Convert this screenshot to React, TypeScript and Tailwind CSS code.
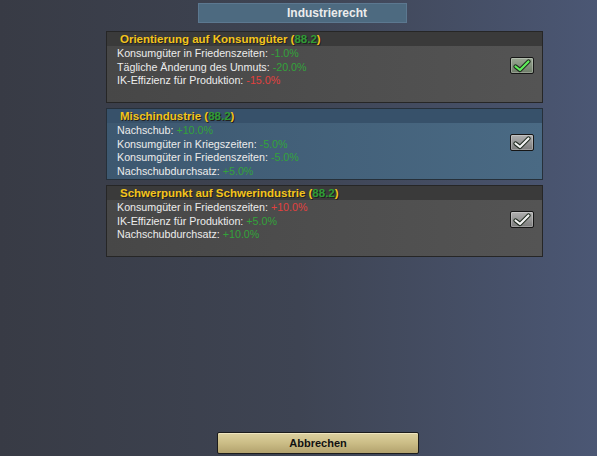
import React from "react";

type Eff = { label: string; value: string; good: boolean };
type Law = { title: string; score: string; effects: Eff[]; active?: boolean; selected?: boolean };

const laws: Law[] = [
  {
    title: "Orientierung auf Konsumgüter",
    score: "88.2",
    selected: true,
    effects: [
      { label: "Konsumgüter in Friedenszeiten:", value: "-1.0%", good: true },
      { label: "Tägliche Änderung des Unmuts:", value: "-20.0%", good: true },
      { label: "IK-Effizienz für Produktion:", value: "-15.0%", good: false },
    ],
  },
  {
    title: "Mischindustrie",
    score: "88.2",
    active: true,
    effects: [
      { label: "Nachschub:", value: "+10.0%", good: true },
      { label: "Konsumgüter in Kriegszeiten:", value: "-5.0%", good: true },
      { label: "Konsumgüter in Friedenszeiten:", value: "-5.0%", good: true },
      { label: "Nachschubdurchsatz:", value: "+5.0%", good: true },
    ],
  },
  {
    title: "Schwerpunkt auf Schwerindustrie",
    score: "88.2",
    effects: [
      { label: "Konsumgüter in Friedenszeiten:", value: "+10.0%", good: false },
      { label: "IK-Effizienz für Produktion:", value: "+5.0%", good: true },
      { label: "Nachschubdurchsatz:", value: "+10.0%", good: true },
    ],
  },
];

function Check({ green }: { green?: boolean }) {
  return (
    <div
      className={
        "w-[24px] h-[17px] rounded-[2px] border border-[#161616] shadow-[inset_0_0_0_1px_rgba(255,255,255,0.25)] flex items-center justify-center " +
        (green
          ? "bg-gradient-to-b from-[#9aa894] to-[#6e7c68]"
          : "bg-gradient-to-b from-[#b0b0b0] to-[#7c7c7c]")
      }
    >
      <svg width="20" height="14" viewBox="0 0 20 14">
        <path d="M3.5 7.5 L8 11 L16.5 2.5" fill="none" stroke="#1e2a1e" strokeWidth="4.2" strokeLinecap="round" strokeLinejoin="round" />
        <path d="M3.5 7.5 L8 11 L16.5 2.5" fill="none" stroke={green ? "#5ff05a" : "#f4f4f4"} strokeWidth="2.2" strokeLinecap="round" strokeLinejoin="round" />
      </svg>
    </div>
  );
}

function Panel({ law }: { law: Law }) {
  const a = law.active;
  return (
    <div
      className={
        "h-[72px] border flex flex-col " +
        (a
          ? "border-[#26303a] bg-gradient-to-r from-[#3d5870] to-[#4a6a84] shadow-[inset_0_1px_0_#6c8aa2]"
          : "border-[#262626] bg-gradient-to-r from-[#474747] to-[#545454]")
      }
    >
      <div className={"h-[14px] pl-[13px] flex items-center " + (a ? "bg-[#37516a]" : "bg-[#3a3a3a]")}>
        <span className="text-[11.5px] font-bold leading-[14px] text-[#f3c41c] [text-shadow:1px_1px_0_#222]">
          {law.title} (<span className="text-[#2f9c35]">{law.score}</span>)
        </span>
      </div>
      <div className="flex flex-1">
        <div className="flex-1 pl-[10px] pt-[1px]">
          {law.effects.map((e, i) => (
            <div key={i} className="text-[10.7px] leading-[13.5px] text-[#ececec] whitespace-nowrap">
              {e.label}{" "}
              <span className={e.good ? "text-[#33a33a]" : "text-[#e2403e]"}>{e.value}</span>
            </div>
          ))}
        </div>
        <div className="mt-[11px] mr-[8px]">
          <Check green={law.selected} />
        </div>
      </div>
    </div>
  );
}

export default function App() {
  return (
    <div
      className="w-[597px] h-[456px] overflow-hidden flex flex-col bg-gradient-to-r from-[#383b45] via-[#3e4453] to-[#4b5774]"
      style={{ fontFamily: '"Liberation Sans", Arial, sans-serif' }}
    >
      <div className="ml-[198px] mt-[3px] w-[209px] h-[20px] bg-[#4d6a80] border border-[#5c7890] flex items-center pl-[88px]">
        <span className="text-[12px] font-bold text-[#ececec] leading-none">Industrierecht</span>
      </div>
      <div className="ml-[106px] mt-[8px] w-[437px] flex flex-col gap-[5px]">
        {laws.map((l, i) => (
          <Panel key={i} law={l} />
        ))}
      </div>
      <div className="mt-auto mb-[2px] ml-[217px] w-[202px] h-[22px] rounded-[2px] border border-[#1c1c1c] bg-gradient-to-b from-[#ddd1a0] via-[#cbbd86] to-[#b2a26e] shadow-[inset_0_1px_0_#efe6c0] flex items-center justify-center">
        <span className="text-[11px] font-bold text-[#111]">Abbrechen</span>
      </div>
    </div>
  );
}
